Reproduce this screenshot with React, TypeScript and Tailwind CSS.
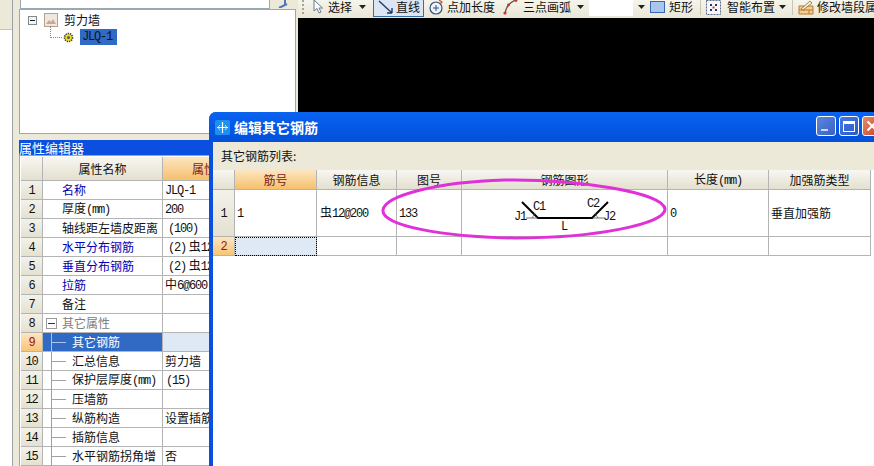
import React from 'react';

const Lat = ({ children }: { children: React.ReactNode }) => (
  <span className="tracking-[-1.2px] font-['Liberation_Mono',monospace]">{children}</span>
);

const Caret = () => (
  <svg width="7" height="4" viewBox="0 0 7 4" className="flex-shrink-0">
    <path d="M0 0h7L3.5 4z" fill="#222" />
  </svg>
);

const Bar = () => <i className="w-px h-[16px] bg-[#c9c6b4] block flex-shrink-0" />;

const propRows = [
  { n: 1, label: '名称', blue: true, value: <Lat>JLQ-1</Lat> },
  { n: 2, label: <>厚度<Lat>(mm)</Lat></>, value: <Lat>200</Lat> },
  { n: 3, label: '轴线距左墙皮距离', value: <span className="pl-[3px]"><Lat>(100)</Lat></span> },
  { n: 4, label: '水平分布钢筋', blue: true, value: <span className="pl-[3px]"><Lat>(2)</Lat> 虫<Lat>12</Lat></span> },
  { n: 5, label: '垂直分布钢筋', blue: true, value: <span className="pl-[3px]"><Lat>(2)</Lat> 虫<Lat>12</Lat></span> },
  { n: 6, label: '拉筋', blue: true, value: <span>中<Lat>6@600</Lat></span> },
  { n: 7, label: '备注', value: '' },
];

const childRows = [
  { n: 9, label: '其它钢筋', value: '', active: true },
  { n: 10, label: '汇总信息', value: '剪力墙' },
  { n: 11, label: <>保护层厚度<Lat>(mm)</Lat></>, value: <span className="pl-[1px]"><Lat>(15)</Lat></span> },
  { n: 12, label: '压墙筋', value: '' },
  { n: 13, label: '纵筋构造', value: '设置插筋' },
  { n: 14, label: '插筋信息', value: '' },
  { n: 15, label: '水平钢筋拐角增', value: '否' },
];

const lineCls = 'border-r border-b border-[#b4b4b4]';
const rowHead = 'bg-gradient-to-b from-[#f3f2ea] to-[#e4e1d1] text-center';
const colHead = 'bg-gradient-to-b from-[#f8f7f1] to-[#e3e0d0] text-center font-normal';
const hotHead = 'bg-gradient-to-b from-[#fce6c0] to-[#f6bf6b] text-center font-normal text-[#7a1c1c]';

function PropertyTable() {
  return (
    <table className="table-fixed border-separate border-spacing-0 w-[277px] text-[12px] leading-none text-[#111]">
      <colgroup>
        <col className="w-[22px]" />
        <col className="w-[120px]" />
        <col />
      </colgroup>
      <thead>
        <tr className="h-[24px]">
          <th className={`${colHead} ${lineCls}`} />
          <th className={`${colHead} ${lineCls}`}>属性名称</th>
          <th className={`${hotHead} ${lineCls} pr-[40px]`}>属性值</th>
        </tr>
      </thead>
      <tbody>
        {propRows.map((r) => (
          <tr key={r.n} className="h-[19px]">
            <td className={`${rowHead} ${lineCls}`}><Lat>{r.n}</Lat></td>
            <td className={`${lineCls} pl-[19px] whitespace-nowrap ${r.blue ? 'text-[#0000b4]' : ''}`}>{r.label}</td>
            <td className={`${lineCls} pl-[2px] whitespace-nowrap overflow-hidden`}>{r.value}</td>
          </tr>
        ))}
        <tr className="h-[19px]">
          <td className={`${rowHead} ${lineCls}`}><Lat>8</Lat></td>
          <td className={`${lineCls} text-[#808080]`}>
            <div className="flex items-center h-[18px] pl-[3px] gap-[5px]">
              <span className="w-[11px] h-[11px] border border-[#9a9a9a] flex items-center justify-center bg-white">
                <i className="block w-[7px] h-px bg-[#333]" />
              </span>
              <span>其它属性</span>
            </div>
          </td>
          <td className={lineCls} />
        </tr>
        {childRows.map((r) => (
          <tr key={r.n} className="h-[19px]">
            <td className={`${lineCls} ${r.active ? 'bg-gradient-to-b from-[#fce6c0] to-[#f6c577] text-center text-[#a01010]' : rowHead}`}>
              <Lat>{r.n}</Lat>
            </td>
            <td className={`${lineCls} ${r.active ? 'bg-[#316ac5] text-white' : ''}`}>
              <div className="flex items-center h-[18px] pl-[8px] whitespace-nowrap">
                <i className={`block w-px h-[19px] flex-shrink-0 ${r.active ? 'bg-[#a9c4ec]' : 'bg-[#a0a0a0]'}`} />
                <i className={`block w-[14px] h-px mr-[6px] flex-shrink-0 ${r.active ? 'bg-[#a9c4ec]' : 'bg-[#a0a0a0]'}`} />
                <span>{r.label}</span>
              </div>
            </td>
            <td className={`${lineCls} pl-[2px] whitespace-nowrap overflow-hidden ${r.active ? 'bg-[#dfe8f5]' : ''}`}>{r.value}</td>
          </tr>
        ))}
      </tbody>
    </table>
  );
}

function Toolbar() {
  return (
    <div className="h-[18px] pb-[4px] flex items-center text-[12px] leading-none text-[#111] bg-gradient-to-b from-[#f6f5ec] to-[#e9e6d5] whitespace-nowrap [&>*]:flex-shrink-0">
      <span className="w-[2px] h-[14px] ml-[4px] mr-[8px] border-l-2 border-dotted border-[#a8a595]" />
      <svg width="12" height="14" viewBox="0 0 12 14" className="mr-[4px]">
        <path d="M2 0v11l3-2.5L7 13l2-1-2-4h3.5z" fill="#fff" stroke="#6a7a90" strokeWidth="1" />
      </svg>
      <span className="w-[24px] mr-[7px]">选择</span>
      <Caret />
      <span className="w-[6px]" />
      <div className="w-[51px] h-[20px] flex items-center border border-[#3a6ea5] bg-[#dbe5f3] ml-[1px]">
        <svg width="16" height="14" viewBox="0 0 16 14" className="ml-[4px] mr-[2px]">
          <path d="M1 1l13 12M14 13V8M14 13H9" fill="none" stroke="#1d3c6e" strokeWidth="1.4" />
        </svg>
        <span>直线</span>
      </div>
      <svg width="16" height="16" viewBox="0 0 16 16" className="ml-[4px] mr-[3px]">
        <circle cx="8" cy="9" r="6" fill="#eef3fb" stroke="#35507c" strokeWidth="1.2" />
        <path d="M8 6v6M5 9h6" stroke="#35507c" />
        <path d="M11 1l3 2-2 2" fill="none" stroke="#c8502a" strokeWidth="1.2" />
      </svg>
      <span className="w-[48px] mr-[8px]">点加长度</span>
      <svg width="15" height="16" viewBox="0 0 15 16" className="mr-[5px]">
        <path d="M2 15C3 7 7 3 13 1" fill="none" stroke="#6f5a3a" strokeWidth="1.4" />
        <circle cx="2" cy="14" r="1.6" fill="#d03030" />
        <circle cx="5.5" cy="6" r="1.4" fill="#d03030" />
        <circle cx="13" cy="1.5" r="1.4" fill="#d03030" />
      </svg>
      <span className="w-[48px] mr-[6px]">三点画弧</span>
      <Caret />
      <span className="w-[5px]" />
      <div className="w-[44px] h-[17px] bg-white" />
      <span className="w-[5px]" />
      <Caret />
      <svg width="15" height="12" viewBox="0 0 15 12" className="ml-[5px] mr-[4px]">
        <rect x="0.5" y="0.5" width="14" height="11" fill="#a9c6ee" stroke="#3a68b0" />
      </svg>
      <span className="w-[24px] mr-[7px]">矩形</span>
      <Bar />
      <svg width="15" height="15" viewBox="0 0 15 15" className="ml-[5px] mr-[6px]">
        <rect x="0.5" y="0.5" width="14" height="14" fill="#f5f6fa" stroke="#5b6b85" strokeDasharray="2 1" />
        <path d="M4 4h2v2H4zM9 4h2v2H9zM4 9h2v2H4zM9 9h2v2H9z" fill="#1d3c6e" />
        <path d="M6.5 6.5h2v2h-2z" fill="#c8402a" />
      </svg>
      <span className="w-[48px] mr-[4px]">智能布置</span>
      <Caret />
      <span className="w-[6px]" />
      <Bar />
      <svg width="16" height="15" viewBox="0 0 16 15" className="ml-[5px] mr-[3px]">
        <path d="M1 6h14v8H1z" fill="#f2cf86" stroke="#b7783a" />
        <path d="M1 10h14M6 6v4M11 10v4" stroke="#b7783a" />
        <path d="M3 9l9-8 2 2-9 7z" fill="#f6f0d0" stroke="#8a6a3a" strokeWidth="0.8" />
      </svg>
      <span>修改墙段属</span>
    </div>
  );
}

const rebarCols = ['w-[22px]', 'w-[82px]', 'w-[80px]', 'w-[65px]', 'w-[206px]', 'w-[101px]', 'w-[102px]'];

function RebarShape() {
  return (
    <svg width="205" height="46" viewBox="0 0 205 46" className="block font-['Liberation_Mono',monospace]">
      <path d="M60 12l16 16h54l16-16" fill="none" stroke="#000" strokeWidth="2" />
      <path d="M64 28h12M130 28h12" stroke="#333" strokeWidth="0.7" />
      <path d="M70 28l3-5M136 28l-3-5" stroke="#555" strokeWidth="0.7" />
      <text x="52" y="30" fontSize="12" letterSpacing="-1.2" fill="#111">J1</text>
      <text x="71" y="20" fontSize="12" letterSpacing="-1.2" fill="#111">C1</text>
      <text x="125" y="17" fontSize="12" letterSpacing="-1.2" fill="#111">C2</text>
      <text x="141" y="30" fontSize="12" letterSpacing="-1.2" fill="#111">J2</text>
      <text x="99" y="40" fontSize="12" fill="#111">L</text>
    </svg>
  );
}

function RebarDialog() {
  return (
    <div className="absolute left-[209px] top-[112px] w-[680px] h-[370px] bg-[#0a50dc] rounded-t-[7px] pl-[4px] flex flex-col text-[12px] leading-none text-[#111]">
      <div className="-ml-[4px] h-[30px] flex items-center flex-shrink-0 rounded-t-[7px] bg-gradient-to-b from-[#0a64f0] via-[#0558e6] to-[#0350d8]">
        <span className="ml-[6px] w-[15px] h-[15px] rounded-[2px] bg-[#1e90f0] flex items-center justify-center flex-shrink-0">
          <svg width="13" height="13" viewBox="0 0 13 13">
            <path d="M6.5 1v11M1 6.5h11" stroke="#fff" strokeWidth="1.2" />
            <path d="M4 4l-2 2.5L4 9M9 4l2 2.5L9 9" fill="none" stroke="#bfe6ff" strokeWidth="1" />
          </svg>
        </span>
        <span className="ml-[4px] text-[14px] font-bold text-white">编辑其它钢筋</span>
        <div className="flex items-center gap-[3px] ml-[498px] mt-[-2px]">
          <span className="w-[20px] h-[20px] rounded-[3px] border border-white bg-gradient-to-br from-[#5a86e0] to-[#3c62c4] flex items-end pl-[4px] pb-[4px] flex-shrink-0">
            <i className="block w-[7px] h-[2px] bg-[#c8d8f5]" />
          </span>
          <span className="w-[20px] h-[20px] rounded-[3px] border border-white bg-gradient-to-br from-[#4a7ae0] to-[#2c58c8] flex items-center justify-center flex-shrink-0">
            <i className="block w-[12px] h-[11px] border border-white border-t-[3px]" />
          </span>
          <span className="w-[20px] h-[20px] rounded-[3px] border border-white bg-gradient-to-br from-[#e88a6a] to-[#c8401e] flex items-center justify-center flex-shrink-0">
            <svg width="12" height="12" viewBox="0 0 12 12">
              <path d="M1.5 1.5l9 9M10.5 1.5l-9 9" stroke="#fff" strokeWidth="2" />
            </svg>
          </span>
        </div>
      </div>
      <div className="h-[28px] bg-[#ece9d8] pl-[8px] flex items-center flex-shrink-0">其它钢筋列表:</div>
      <div className="flex-1 bg-white">
        <table className="table-fixed border-separate border-spacing-0 w-[658px]">
          <colgroup>
            {rebarCols.map((c) => <col key={c} className={c} />)}
          </colgroup>
          <thead>
            <tr className="h-[20px]">
              <th className={`${colHead} ${lineCls}`} />
              <th className={`${hotHead} ${lineCls}`}>筋号</th>
              <th className={`${colHead} ${lineCls}`}>钢筋信息</th>
              <th className={`${colHead} ${lineCls}`}>图号</th>
              <th className={`${colHead} ${lineCls}`}>钢筋图形</th>
              <th className={`${colHead} ${lineCls}`}>长度<Lat>(mm)</Lat></th>
              <th className={`${colHead} ${lineCls}`}>加强筋类型</th>
            </tr>
          </thead>
          <tbody>
            <tr className="h-[47px]">
              <td className={`${rowHead} ${lineCls}`}><Lat>1</Lat></td>
              <td className={`${lineCls} pl-[2px]`}><Lat>1</Lat></td>
              <td className={`${lineCls} pl-[3px] whitespace-nowrap`}>虫<Lat>12@200</Lat></td>
              <td className={`${lineCls} pl-[2px]`}><Lat>133</Lat></td>
              <td className={lineCls}><RebarShape /></td>
              <td className={`${lineCls} pl-[2px]`}><Lat>0</Lat></td>
              <td className={`${lineCls} pl-[2px]`}>垂直加强筋</td>
            </tr>
            <tr className="h-[19px]">
              <td className={`${lineCls} bg-gradient-to-b from-[#fce6c0] to-[#f6c577] text-center text-[#a01010]`}><Lat>2</Lat></td>
              <td className={`${lineCls} bg-[#dfe8f5] outline-1 -outline-offset-1 outline-dotted outline-black`} />
              <td className={lineCls} />
              <td className={lineCls} />
              <td className={lineCls} />
              <td className={lineCls} />
              <td className={lineCls} />
            </tr>
          </tbody>
        </table>
      </div>
    </div>
  );
}

export default function App() {
  return (
    <div className="relative w-[874px] h-[466px] overflow-hidden flex bg-[#ece9d8] font-['Noto_Sans_CJK_SC','Liberation_Sans',sans-serif] text-[12px]">
      <div className="w-[13px] flex flex-col border-r border-[#9aa3a8] flex-shrink-0">
        <div className="h-[30px] bg-[#ece9d8] border-b border-[#c8c5b4]" />
        <div className="flex-1 bg-white" />
      </div>

      <div className="w-[285px] flex-shrink-0 pl-[6px] pr-[2px] flex flex-col">
        <div className="h-[9px] flex flex-shrink-0">
          <div className="w-[250px] ml-[1px] bg-white border-b border-x border-[#9aa8b0]" />
          <div className="flex-1 flex justify-center">
            <svg width="12" height="8" viewBox="0 0 12 8">
              <path d="M2 8l8-4M8 0v4" stroke="#4a78c0" strokeWidth="2" fill="none" />
            </svg>
          </div>
        </div>
        <div className="h-[125px] flex-shrink-0 bg-white border border-[#9aa8b0] pl-[8px] pt-[2px] text-[#111] leading-none">
          <div className="flex items-center h-[16px]">
            <span className="w-[9px] h-[9px] border border-[#7f8a90] flex items-center justify-center bg-[#f4f4f0]">
              <i className="block w-[5px] h-px bg-[#222]" />
            </span>
            <svg width="14" height="14" viewBox="0 0 14 14" className="ml-[7px]">
              <rect x="0.5" y="0.5" width="13" height="13" fill="#f0e8de" stroke="#b8a28c" />
              <path d="M2 11l3-4 2 2 2-3 3 5z" fill="#c8a898" />
            </svg>
            <span className="ml-[6px] text-[12px]">剪力墙</span>
          </div>
          <div className="flex items-center h-[16px] mt-[1px]">
            <span className="ml-[22px] w-[12px] h-[12px] -mt-[10px] border-l border-b border-dotted border-[#888]" />
            <svg width="11" height="11" viewBox="0 0 11 11" className="ml-[1px]">
              <circle cx="5.5" cy="5.5" r="4" fill="#f0e020" stroke="#333" strokeDasharray="1.2 1" strokeWidth="1.6" />
              <circle cx="5.5" cy="5.5" r="1.5" fill="#556" />
            </svg>
            <span className="ml-[6px] h-[16px] w-[37px] bg-[#316ac5] flex items-center pl-[2px] text-[#0b1220]"><Lat>JLQ-1</Lat></span>
          </div>
        </div>
        <div className="h-[6px] flex-shrink-0" />
        <div className="h-[15px] flex-shrink-0 bg-[#0a4fe0] text-white text-[13px] leading-none flex items-center">属性编辑器</div>
        <div className="flex-1 bg-white border border-[#9aa8b0] border-r-0 border-b-0 pt-[1px] pl-[1px] overflow-hidden">
          <PropertyTable />
        </div>
      </div>

      <div className="flex-1 flex flex-col min-w-0">
        <Toolbar />
        <div className="flex-1 bg-black" />
      </div>

      <RebarDialog />

      {/* hand drawn marker on top of the screenshot */}
      <svg width="300" height="70" viewBox="0 0 300 70" className="absolute left-[375px] top-[174px] pointer-events-none">
        <path
          d="M8 36C10 22 60 8 130 6C200 5 288 18 290 35C291 50 220 64 140 64C70 63 6 52 8 36Z"
          fill="none"
          stroke="#e030d8"
          strokeWidth="3"
        />
      </svg>
    </div>
  );
}
